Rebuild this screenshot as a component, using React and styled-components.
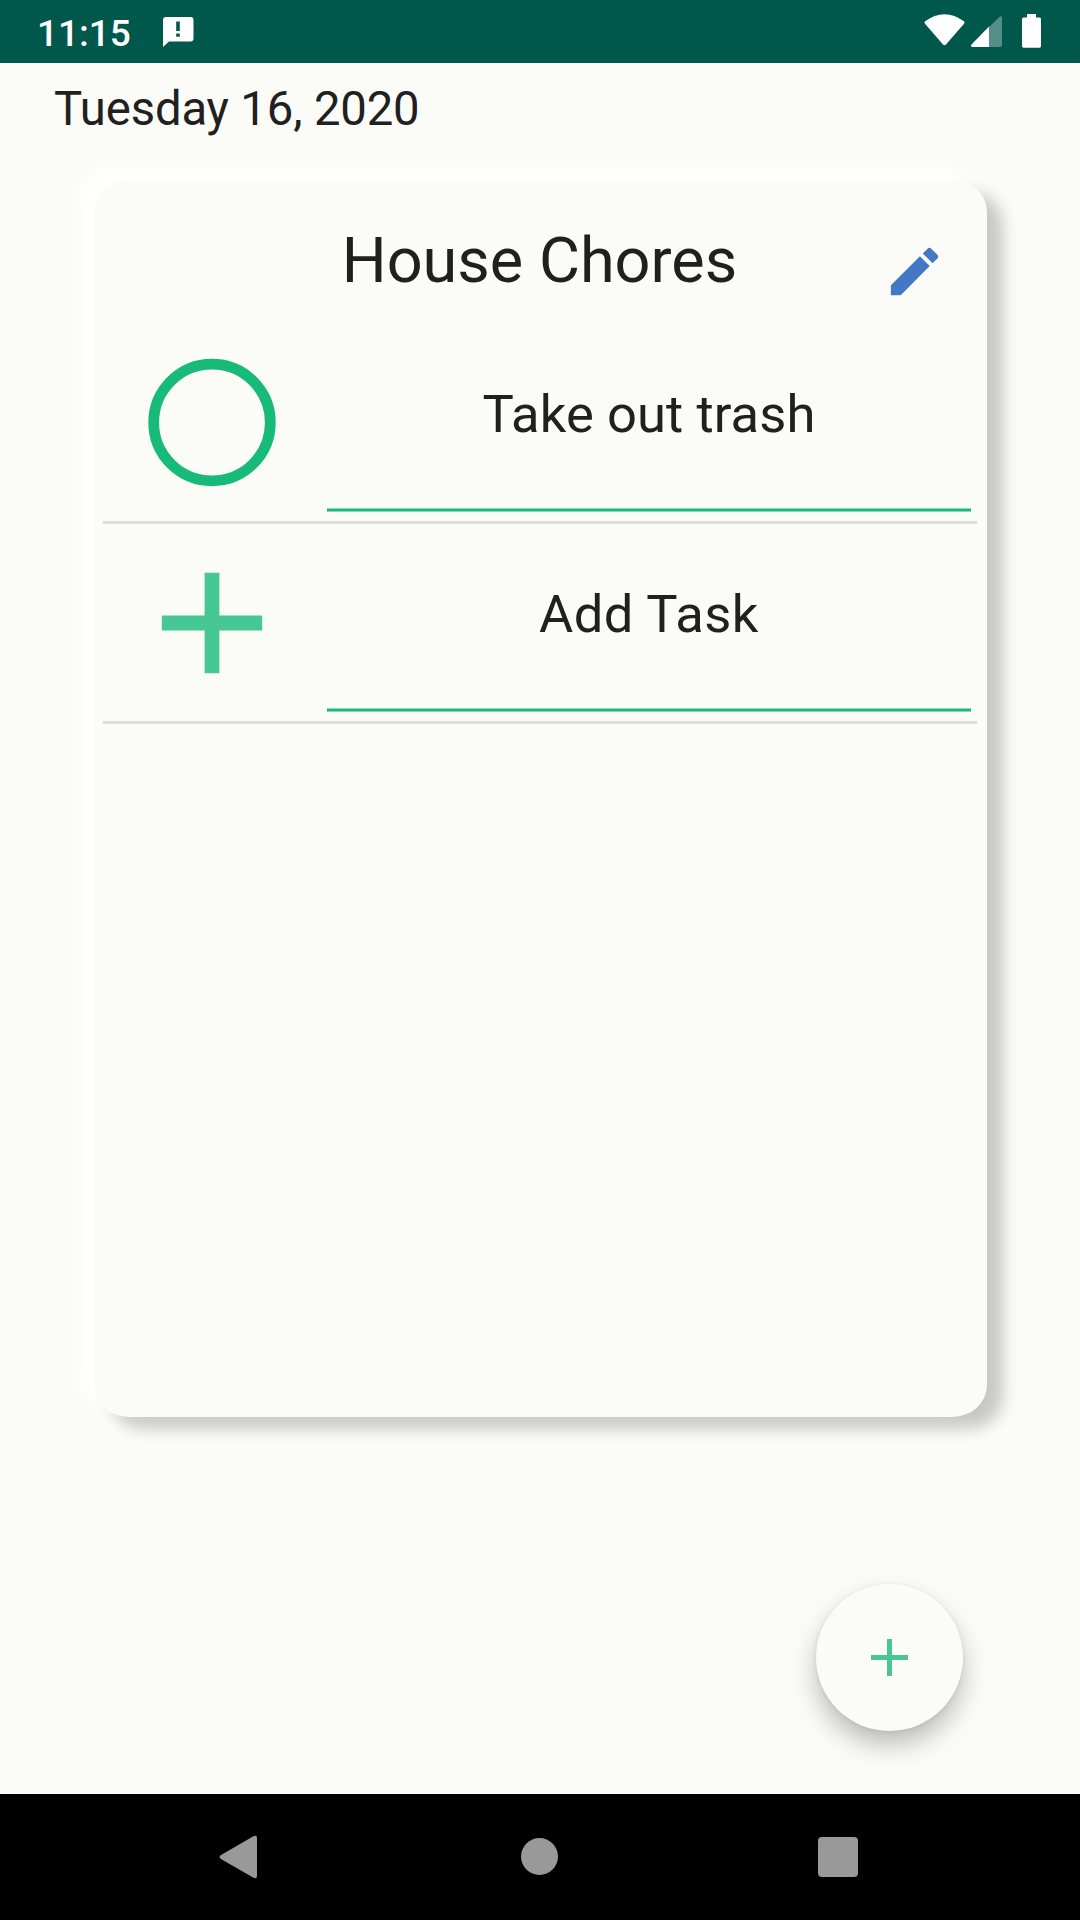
import React from "react";
import styled, { createGlobalStyle } from "styled-components";

const GlobalStyle = createGlobalStyle`
  *, *::before, *::after { box-sizing: border-box; }
  body { margin: 0; background: #fbfcf8; font-family: Roboto, sans-serif; }
  button { font: inherit; border: 0; padding: 0; background: none; }
  svg { display: block; }
`;

const Screen = styled.div`
  width: 1080px;
  height: 1920px;
  display: flex;
  flex-direction: column;
  overflow: hidden;
  background: #fbfcf8;
  color: #20211f;
`;

const StatusBar = styled.header`
  height: 63px;
  flex: none;
  display: flex;
  align-items: center;
  background: #00574b;
  color: #fff;
`;

const Clock = styled.span`
  width: 93px;
  margin-left: 37px;
  padding-top: 4px;
  font-size: 37px;
  font-weight: 500;
  line-height: 44px;
  white-space: nowrap;
`;

const NoticeIcon = styled.svg`
  margin-left: 30px;
`;

const StatusIcons = styled.svg`
  margin-left: auto;
`;

const Main = styled.main`
  flex: 1;
  display: flex;
  flex-direction: column;
`;

const DateText = styled.h2`
  margin: 18px 0 0 54px;
  height: 56px;
  font-size: 47.25px;
  font-weight: 400;
  line-height: 56px;
  letter-spacing: -0.15px;
`;

const Card = styled.section`
  width: 893px;
  height: 1237px;
  margin: 43px 0 0 94px;
  border-radius: 35px / 32px;
  background: #fbfcf8;
  box-shadow: -14px -11px 16px #ffffff, 16px 12px 15px #c8c8c6;
`;

const CardHeader = styled.div`
  height: 144px;
  display: grid;
  grid-template-columns: 104px 1fr 104px;
`;

const Title = styled.h1`
  grid-column: 2;
  margin: 44px 2px 0 0;
  font-size: 63px;
  font-weight: 400;
  line-height: 74px;
  text-align: center;
`;

const EditButton = styled.button`
  width: 63px;
  height: 63px;
  margin-top: 60px;
`;

const TaskList = styled.ul`
  list-style: none;
  margin: 0 10px 0 9px;
  padding: 0;
`;

const TaskRow = styled.li`
  height: 200px;
  display: flex;
  border-bottom: 3px solid #ddded9;
`;

const TaskMark = styled.div`
  width: 218px;
  display: flex;
  align-items: center;
  justify-content: center;
`;

const TaskField = styled.div`
  width: 644px;
  height: 188px;
  margin-left: 6px;
  padding-top: 59px;
  background: linear-gradient(#86dab5 1px, #18ba7a 1px 3px, #86dab5 3px) bottom / 100% 4px no-repeat;
  font-size: 52.5px;
  line-height: 62px;
  letter-spacing: ${(p) => p.$tracking}px;
  text-align: center;
`;

const AddButton = styled.button`
  width: 147px;
  height: 147px;
  margin: 167px 117px 0 auto;
  display: grid;
  place-items: center;
  border-radius: 50%;
  background: #fbfcf8;
  box-shadow: 0 14px 26px rgba(0, 0, 0, 0.25), 0 1px 5px rgba(0, 0, 0, 0.08);
`;

const NavBar = styled.nav`
  height: 126px;
  flex: none;
  background: #000;
`;

const Circle = () => (
  <svg width="130" height="130" viewBox="0 0 130 130">
    <circle cx="65" cy="64.500" r="58.300" fill="none" stroke="#18ba7a" strokeWidth="10.800" />
  </svg>
);

const Plus = ({ size, thickness, inset = 0 }) => (
  <svg width={size} height={size} viewBox={`0 0 ${size} ${size}`}>
    <path
      d={`M${inset} ${size / 2}H${size - inset}M${size / 2} ${inset}V${size - inset}`}
      stroke="#46c794"
      strokeWidth={thickness}
    />
  </svg>
);

const tasks = [
  { label: "Take out trash", tracking: 0.1, mark: <Circle /> },
  { label: "Add Task", tracking: 0.45, mark: <Plus size={102} thickness={14.8} inset={0.8} /> },
];

export default function App() {
  return (
    <>
      <GlobalStyle />
      <Screen>
        <StatusBar>
          <Clock>11:15</Clock>
          <NoticeIcon width="36" height="36" viewBox="0 0 36 36">
            <path
              fill="#fff"
              fillRule="evenodd"
              d="M6 3H30.500Q33.500 3 33.500 6V24.500Q33.500 27.500 30.500 27.500H9L3 33V6Q3 3 6 3ZM16.200 7.500V17H19.800V7.500ZM16.200 19.500V22.700H19.800V19.500Z"
            />
          </NoticeIcon>
          <StatusIcons width="160" height="63" viewBox="920 0 160 63" fill="#fff">
            <path d="M924.800 21.500Q944.500 7 964.300 21.500Q965 22.500 964 23.700L946 44.500Q944.500 46 943 44.500L925 23.700Q924 22.500 924.800 21.500Z" />
            <path opacity="0.33" d="M989 27L1000 16.500Q1002 15.500 1002 18V45Q1002 47 1000 47H989Z" />
            <path d="M989 26.500V47H972.500Q970 46.500 971.500 44.500Z" />
            <path d="M1027 14H1036V17.500H1039.500Q1041 17.500 1041 19V46Q1041 47.700 1039.500 47.700H1023.500Q1022 47.700 1022 46V19Q1022 17.500 1023.500 17.500H1027Z" />
          </StatusIcons>
        </StatusBar>
        <Main>
          <DateText>Tuesday 16, 2020</DateText>
          <Card>
            <CardHeader>
              <Title>House Chores</Title>
              <EditButton aria-label="Edit">
                <svg width="63" height="63" viewBox="0 0 24 24" fill="#4577c7">
                  <path d="M3 17.250V21h3.750L17.810 9.940l-3.750-3.750L3 17.250zM20.710 7.040c.39-.39.39-1.020 0-1.410l-2.340-2.340c-.39-.39-1.020-.39-1.410 0l-1.830 1.830 3.750 3.750 1.830-1.830z" />
                </svg>
              </EditButton>
            </CardHeader>
            <TaskList>
              {tasks.map((task) => (
                <TaskRow key={task.label}>
                  <TaskMark>{task.mark}</TaskMark>
                  <TaskField $tracking={task.tracking}>{task.label}</TaskField>
                </TaskRow>
              ))}
            </TaskList>
          </Card>
          <AddButton aria-label="Add list">
            <Plus size={37} thickness={5} />
          </AddButton>
        </Main>
        <NavBar>
          <svg width="1080" height="126" viewBox="0 1794 1080 126" fill="#999">
            <path d="M221 1855L253 1836.500Q257 1834.500 257 1838V1876Q257 1879.500 253 1877.500L221 1859Q218 1857 221 1855Z" />
            <circle cx="539.500" cy="1856.500" r="18.500" />
            <rect x="818" y="1837" width="40" height="40" rx="4" />
          </svg>
        </NavBar>
      </Screen>
    </>
  );
}
